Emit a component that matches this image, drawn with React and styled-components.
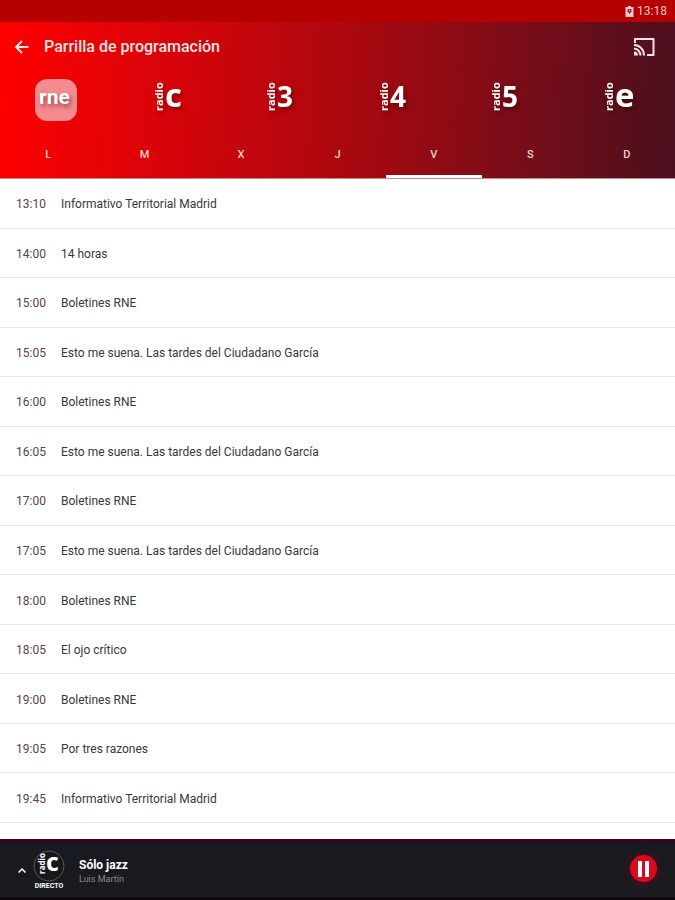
import React, { useState } from "react";
import styled, { createGlobalStyle } from "styled-components";

const GlobalStyle = createGlobalStyle`
  * { box-sizing: border-box; }
  body { margin: 0; background: #fff; font-family: Roboto, "Liberation Sans", sans-serif; }
  button { font: inherit; color: inherit; background: none; border: 0; padding: 0; cursor: pointer; }
`;

const Page = styled.div`
  display: flex;
  flex-direction: column;
  min-height: 100vh;
`;

const StatusBar = styled.div`
  display: flex;
  align-items: center;
  justify-content: flex-end;
  gap: 3px;
  height: 22px;
  padding: 0 8px;
  background: #b60000;
  color: #f3c9c9;
  font-size: 12px;
`;

const Header = styled.header`
  background: linear-gradient(94deg, #fc0000 2%, #d4040a 27%, #aa080f 52%, #780d18 77%, #4a0f1d 100%);
  color: #fbe4e4;
  border-bottom: 1px solid #c9898c;
`;

const TitleBar = styled.div`
  display: flex;
  align-items: center;
  height: 50px;
  padding: 0 20px 0 14px;
`;

const IconButton = styled.button`
  display: flex;
`;

const Title = styled.h1`
  flex: 1;
  margin: 0 0 0 14px;
  font-size: 16px;
  line-height: 20px;
  font-weight: 500;
`;

const Stations = styled.nav`
  display: grid;
  grid-template-columns: repeat(6, 1fr);
  height: 56px;
`;

const StationButton = styled.button`
  display: flex;
  align-items: center;
  justify-content: center;
`;

const StationTile = styled.span`
  display: flex;
  width: 42px;
  height: 42px;
  border-radius: 12px;
  background: ${(p) => (p.$active ? "#f58a8f" : "transparent")};
`;

const Days = styled.div`
  display: grid;
  grid-template-columns: repeat(7, 1fr);
  height: 50px;
`;

const DayTab = styled.button`
  && {
    padding-top: 6px;
    border-bottom: 3px solid ${(p) => (p.$active ? "#fff" : "transparent")};
    font-size: 11px;
    font-weight: 500;
    color: #f4d0d0;
  }
`;

const Schedule = styled.ul`
  flex: 1;
  display: grid;
  grid-auto-rows: 1fr;
  margin: 0;
  padding: 0 0 16px;
  list-style: none;
  background: #fff;
`;

const Programme = styled.li`
  display: flex;
  align-items: center;
  min-height: 48px;
  padding: 2px 16px 0;
  border-bottom: 1px solid #e6e6e6;
  font-size: 12px;
  color: #383838;
`;

const Time = styled.time`
  width: 45px;
  color: #604048;
`;

const Player = styled.footer`
  display: flex;
  align-items: center;
  height: 61px;
  padding: 0 18px 0 17px;
  background: #191a20;
  border-top: 3px solid #430019;
  border-bottom: 3px solid #14060f;
  color: #fff;
`;

const Live = styled.div`
  display: flex;
  flex-direction: column;
  align-items: center;
  width: 32px;
  margin: 0 14px 0 6px;
  font-size: 7px;
  line-height: 8px;
  font-weight: 700;
`;

const Track = styled.div`
  flex: 1;
  padding-top: 2px;
`;

const TrackTitle = styled.div`
  font-size: 12px;
  line-height: 16px;
  font-weight: 700;
`;

const TrackHost = styled.div`
  font-size: 9px;
  line-height: 12px;
  color: #8a8a90;
`;

const PlayButton = styled.button`
  && {
    display: flex;
    align-items: center;
    justify-content: center;
    width: 27px;
    height: 27px;
    margin-bottom: 2px;
    border-radius: 50%;
    background: #d90a1c;
    box-shadow: 0 1px 8px #6d0719;
  }
`;

const Drawing = styled.svg`
  display: block;
  overflow: visible;
  font-family: "Open Sans", "Noto Sans", sans-serif;
  font-weight: 700;
`;

const LogoInk = styled.g`
  fill: #fff;
  filter: drop-shadow(2px 3px 2px rgba(40, 0, 0, 0.45));
`;

const Wordmark = styled.text`
  font-family: Roboto, "Liberation Sans", sans-serif;
`;

function RadioMark({ mark }) {
  return (
    <Drawing width="42" height="42" viewBox="0 0 42 42" role="img" aria-label={`radio ${mark}`}>
      <LogoInk>
        <text transform="translate(15 32) rotate(-90)" fontSize="11">radio</text>
        <text x="17" y="28" fontSize={/\d/.test(mark) ? 28 : 33}>{mark}</text>
      </LogoInk>
    </Drawing>
  );
}

function RneMark() {
  return (
    <Drawing width="42" height="42" viewBox="0 0 42 42" role="img" aria-label="rne">
      <LogoInk>
        <Wordmark x="4" y="25" fontSize="21">rne</Wordmark>
      </LogoInk>
    </Drawing>
  );
}

function LiveLogo() {
  return (
    <Drawing width="32" height="32" viewBox="0 0 32 32" aria-hidden="true">
      <circle cx="16" cy="16" r="15" fill="#17171c" stroke="#55555b" />
      <g fill="#fff">
        <text transform="translate(12 24) rotate(-90)" fontSize="8">radio</text>
        <text x="13" y="21" fontSize="25">c</text>
      </g>
    </Drawing>
  );
}

const stations = ["rne", "c", "3", "4", "5", "e"];
const days = ["L", "M", "X", "J", "V", "S", "D"];
const programmes = [
  ["13:10", "Informativo Territorial Madrid"],
  ["14:00", "14 horas"],
  ["15:00", "Boletines RNE"],
  ["15:05", "Esto me suena. Las tardes del Ciudadano García"],
  ["16:00", "Boletines RNE"],
  ["16:05", "Esto me suena. Las tardes del Ciudadano García"],
  ["17:00", "Boletines RNE"],
  ["17:05", "Esto me suena. Las tardes del Ciudadano García"],
  ["18:00", "Boletines RNE"],
  ["18:05", "El ojo crítico"],
  ["19:00", "Boletines RNE"],
  ["19:05", "Por tres razones"],
  ["19:45", "Informativo Territorial Madrid"],
];

export default function App() {
  const [station, setStation] = useState("rne");
  const [day, setDay] = useState("V");
  return (
    <Page>
      <GlobalStyle />
      <StatusBar>
        <svg width="9" height="11" viewBox="0 0 9 11" aria-hidden="true">
          <path d="M3 0h3v1h2.500v10h-8V1H3z" fill="#f3c9c9" />
          <path d="M2.500 3h4v2.500L4.500 8l-2-2.500z" fill="#8a3030" />
          <path d="M4 4h1v1H4z" fill="#f3c9c9" />
        </svg>
        <span>13:18</span>
      </StatusBar>
      <Header>
        <TitleBar>
          <IconButton aria-label="Volver">
            <svg width="16" height="16" viewBox="0 0 16 16" fill="none" stroke="currentColor" strokeWidth="2">
              <path d="M14.500 8H2.500M8 2 2 8l6 6" />
            </svg>
          </IconButton>
          <Title>Parrilla de programación</Title>
          <IconButton aria-label="Enviar a dispositivo">
            <svg width="22" height="18" viewBox="0 0 22 18" fill="none" stroke="currentColor" strokeWidth="2" strokeLinejoin="round">
              <path d="M2 5V1h18.500v16H14" />
              <path d="M1 7a10 10 0 0 1 10 10.500M1 10.500a7 7 0 0 1 6.500 7" />
              <path d="M1 13.500a4 4 0 0 1 4 4H1z" fill="currentColor" stroke="none" />
            </svg>
          </IconButton>
        </TitleBar>
        <Stations aria-label="Emisoras">
          {stations.map((s) => (
            <StationButton key={s} onClick={() => setStation(s)} aria-pressed={s === station}>
              <StationTile $active={s === station}>
                {s === "rne" ? <RneMark /> : <RadioMark mark={s} />}
              </StationTile>
            </StationButton>
          ))}
        </Stations>
        <Days role="tablist" aria-label="Día">
          {days.map((d) => (
            <DayTab key={d} role="tab" aria-selected={d === day} $active={d === day} onClick={() => setDay(d)}>
              {d}
            </DayTab>
          ))}
        </Days>
      </Header>
      <Schedule>
        {programmes.map(([time, name]) => (
          <Programme key={time}>
            <Time>{time}</Time>
            <span>{name}</span>
          </Programme>
        ))}
      </Schedule>
      <Player>
        <IconButton aria-label="Desplegar reproductor">
          <svg width="10" height="8" viewBox="0 0 10 8" fill="none" stroke="currentColor" strokeWidth="1.500">
            <path d="M1.500 6.500 5 3l3.500 3.500" />
          </svg>
        </IconButton>
        <Live>
          <LiveLogo />
          DIRECTO
        </Live>
        <Track>
          <TrackTitle>Sólo jazz</TrackTitle>
          <TrackHost>Luis Martín</TrackHost>
        </Track>
        <PlayButton aria-label="Pausar">
          <svg width="13" height="16" viewBox="0 0 13 16" fill="#fff" aria-hidden="true">
            <path d="M1 0h4v16H1zM8 0h4v16H8z" />
          </svg>
        </PlayButton>
      </Player>
    </Page>
  );
}
